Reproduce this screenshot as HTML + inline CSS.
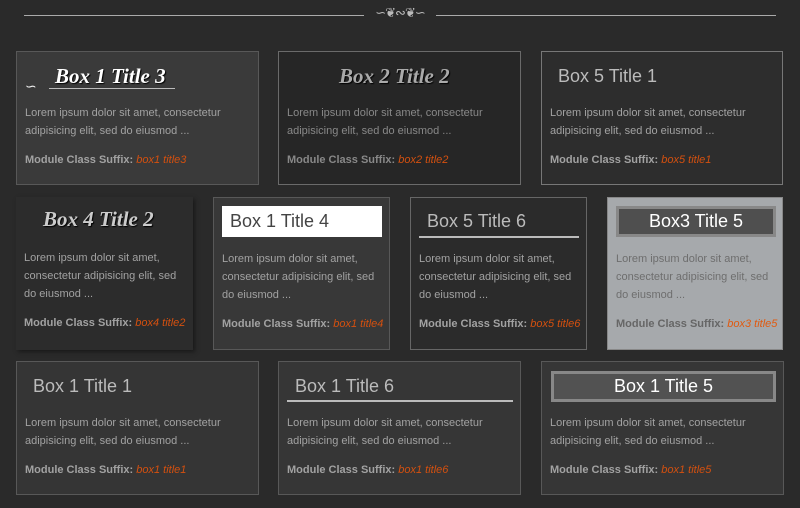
<!DOCTYPE html>
<html><head><style>
*{margin:0;padding:0;box-sizing:border-box}
body{width:800px;height:508px;background:#2a2a2a;font-family:"Liberation Sans",sans-serif;position:relative;overflow:hidden}
.b{position:absolute;border:1px solid #585858;background:#363636}
.t{position:absolute;font-size:18px;color:#bbb;white-space:nowrap}
.s{position:absolute;font-family:"Liberation Serif",serif;font-style:italic;font-weight:bold;font-size:21px;color:#ddd;white-space:nowrap;text-shadow:1px 1px 1px #000}
.p{position:absolute;left:8px;top:52px;font-size:11px;line-height:18px;color:#a2a2a2}
.m{position:absolute;left:8px;font-size:11px;line-height:18px;color:#a2a2a2;font-weight:bold;white-space:nowrap}
.m i{color:#d4500f;font-weight:normal}
.r1{top:51px;height:134px}.r3{top:361px;height:134px}.r2{top:197px;height:153px}
</style></head><body>
<div style="position:absolute;left:24px;top:15px;width:340px;height:1px;background:#aaa"></div>
<div style="position:absolute;left:436px;top:15px;width:340px;height:1px;background:#aaa"></div>
<div style="position:absolute;left:360px;top:5px;width:80px;text-align:center;font-family:'Liberation Serif',serif;color:#bbb;font-size:13px;letter-spacing:-1px">∽❦∾❦∽</div>

<div class="b r1" style="left:16px;width:243px;background:#3a3a3a">
<div style="position:absolute;left:8px;top:26px;color:#eee;font-size:14px">∽</div>
<div class="s" style="left:38px;top:12px;color:#fff">Box 1 Title 3</div>
<div style="position:absolute;left:32px;top:36px;width:126px;height:1px;background:#bbb"></div>
<div class="p">Lorem ipsum dolor sit amet, consectetur<br>adipisicing elit, sed do eiusmod ...</div>
<div class="m" style="top:99px">Module Class Suffix: <i>box1 title3</i></div></div>

<div class="b r1" style="left:278px;width:243px;background:#262626;border-color:#6a6a6a">
<div class="s" style="left:60px;top:12px;color:#aaa">Box 2 Title 2</div>
<div class="p" style="color:#888">Lorem ipsum dolor sit amet, consectetur<br>adipisicing elit, sed do eiusmod ...</div>
<div class="m" style="top:99px;color:#888">Module Class Suffix: <i>box2 title2</i></div></div>

<div class="b r1" style="left:541px;width:242px;background:#2d2d2d;border-color:#777">
<div class="t" style="left:16px;top:14px">Box 5 Title 1</div>
<div class="p">Lorem ipsum dolor sit amet, consectetur<br>adipisicing elit, sed do eiusmod ...</div>
<div class="m" style="top:99px">Module Class Suffix: <i>box5 title1</i></div></div>

<div class="b r2" style="left:16px;width:177px;background:#2c2c2c;border:none;box-shadow:2px 2px 4px #1a1a1a">
<div class="s" style="left:27px;top:10px;color:#ccc">Box 4 Title 2</div>
<div class="p">Lorem ipsum dolor sit amet,<br>consectetur adipisicing elit, sed<br>do eiusmod ...</div>
<div class="m" style="top:117px">Module Class Suffix: <i>box4 title2</i></div></div>

<div class="b r2" style="left:213px;width:177px;background:#383838">
<div style="position:absolute;left:8px;top:8px;width:160px;height:31px;background:#fff"></div>
<div class="t" style="left:16px;top:13px;color:#444">Box 1 Title 4</div>
<div class="p">Lorem ipsum dolor sit amet,<br>consectetur adipisicing elit, sed<br>do eiusmod ...</div>
<div class="m" style="top:117px">Module Class Suffix: <i>box1 title4</i></div></div>

<div class="b r2" style="left:410px;width:177px;background:#2b2b2b;border-color:#666">
<div class="t" style="left:16px;top:13px">Box 5 Title 6</div>
<div style="position:absolute;left:8px;top:38px;width:160px;height:2px;background:#bbb"></div>
<div class="p">Lorem ipsum dolor sit amet,<br>consectetur adipisicing elit, sed<br>do eiusmod ...</div>
<div class="m" style="top:117px">Module Class Suffix: <i>box5 title6</i></div></div>

<div class="b r2" style="left:607px;width:176px;background:#a6a9ac;border-color:#888">
<div style="position:absolute;left:8px;top:8px;width:160px;height:31px;background:#4f4f4f;border:3px solid #888"></div>
<div class="t" style="left:8px;width:160px;text-align:center;top:13px;color:#fff">Box3 Title 5</div>
<div class="p" style="color:#6e6e6e">Lorem ipsum dolor sit amet,<br>consectetur adipisicing elit, sed<br>do eiusmod ...</div>
<div class="m" style="top:117px;color:#666">Module Class Suffix: <i style="color:#e05a10">box3 title5</i></div></div>

<div class="b r3" style="left:16px;width:243px;background:#353535">
<div class="t" style="left:16px;top:14px">Box 1 Title 1</div>
<div class="p">Lorem ipsum dolor sit amet, consectetur<br>adipisicing elit, sed do eiusmod ...</div>
<div class="m" style="top:99px">Module Class Suffix: <i>box1 title1</i></div></div>

<div class="b r3" style="left:278px;width:243px;background:#363636">
<div class="t" style="left:16px;top:14px">Box 1 Title 6</div>
<div style="position:absolute;left:8px;top:38px;width:226px;height:2px;background:#bbb"></div>
<div class="p">Lorem ipsum dolor sit amet, consectetur<br>adipisicing elit, sed do eiusmod ...</div>
<div class="m" style="top:99px">Module Class Suffix: <i>box1 title6</i></div></div>

<div class="b r3" style="left:541px;width:243px;background:#363636">
<div style="position:absolute;left:9px;top:9px;width:225px;height:31px;background:#525252;border:3px solid #888"></div>
<div class="t" style="left:9px;width:225px;text-align:center;top:14px;color:#fff">Box 1 Title 5</div>
<div class="p">Lorem ipsum dolor sit amet, consectetur<br>adipisicing elit, sed do eiusmod ...</div>
<div class="m" style="top:99px">Module Class Suffix: <i>box1 title5</i></div></div>
</body></html>
